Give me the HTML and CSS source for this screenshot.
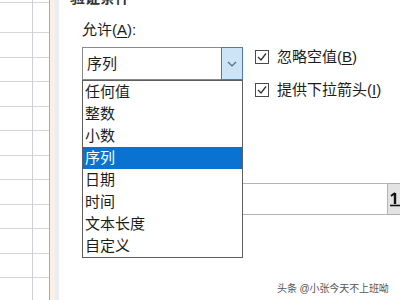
FILE: index.html
```html
<!DOCTYPE html>
<html>

<head>
    <meta charset="UTF-8">
    <title>数据验证</title>
    <link rel="stylesheet" href="styles.css">
</head>

<body>
    <div class="page">
        <div class="sheet"></div>
        <div class="sheet-edge"></div>
        <div class="sheet-shade"></div>

        <div class="dialog">
            <div class="group-title">验证条件</div>
            <div class="field-label">允许(<u>A</u>):</div>

            <div class="allow-row">
                <div class="combo-wrap">
                    <div class="combo">
                        <span class="combo-text">序列</span>
                        <span class="combo-btn">
                            <svg width="10" height="6" viewBox="0 0 10 6">
                                <path d="M1 1 L5 5 L9 1" fill="none" stroke="#5a6a7a" stroke-width="1.2" />
                            </svg>
                        </span>
                    </div>
                    <ul class="drop-list">
                        <li>任何值</li>
                        <li>整数</li>
                        <li>小数</li>
                        <li class="selected">序列</li>
                        <li>日期</li>
                        <li>时间</li>
                        <li>文本长度</li>
                        <li>自定义</li>
                    </ul>
                </div>

                <div class="checks">
                    <label class="check">
                        <span class="box">
                            <svg width="12" height="12" viewBox="0 0 12 12">
                                <path d="M2 6 L5 9 L10 2.5" fill="none" stroke="#333" stroke-width="1.3" />
                            </svg>
                        </span>
                        <span>忽略空值(<u>B</u>)</span>
                    </label>
                    <label class="check">
                        <span class="box">
                            <svg width="12" height="12" viewBox="0 0 12 12">
                                <path d="M2 6 L5 9 L10 2.5" fill="none" stroke="#333" stroke-width="1.3" />
                            </svg>
                        </span>
                        <span>提供下拉箭头(<u>I</u>)</span>
                    </label>
                </div>
            </div>

            <div class="source-row">
                <div class="source-input"></div>
                <div class="source-btn">
                    <svg width="12" height="16" viewBox="0 0 12 16">
                        <path d="M7 2 L7 13" stroke="#111" stroke-width="2.4" />
                        <path d="M3 5 L7 2" stroke="#111" stroke-width="2" />
                        <path d="M2 14.5 L12 14.5" stroke="#111" stroke-width="1.6" />
                    </svg>
                </div>
            </div>
        </div>

        <div class="watermark">头条 @小张今天不上班呦</div>
    </div>
</body>

</html>
```

FILE: styles.css
```css
* {
    margin: 0;
    padding: 0;
    box-sizing: border-box;
}

body,
html {
    width: 400px;
    height: 300px;
    overflow: hidden;
    background: #fff;
}

body {
    font-family: "Liberation Sans", "Noto Sans CJK SC", sans-serif;
    color: #1c1c1c;
    font-size: 15px;
}

u {
    text-decoration: underline;
    text-underline-offset: 2px;
}

.page {
    position: relative;
    display: flex;
    width: 400px;
    height: 300px;
}

/* spreadsheet behind the dialog */
.sheet {
    flex-shrink: 0;
    width: 49px;
    height: 100%;
    background-color: #fff;
    background-image:
        linear-gradient(to right, transparent 32px, #cfcfd8 32px, #cfcfd8 33px, transparent 33px),
        repeating-linear-gradient(to bottom, transparent 0, transparent 23.5px, #d6d6d6 23.5px, #d6d6d6 24.5px);
    background-position: 0 0, 0 9px;
}

.sheet-edge {
    flex-shrink: 0;
    width: 6px;
    height: 100%;
    border-left: 1px solid #c6a676;
    background: #f9f1e3;
}

.sheet-shade {
    flex-shrink: 0;
    width: 4px;
    height: 100%;
    background: #ececf4;
}

.dialog {
    flex: 1;
    min-width: 0;
    display: flex;
    flex-direction: column;
    padding-left: 23px;
    background: #fff;
}

.group-title {
    margin-top: -12px;
    margin-left: -12px;
    line-height: 20px;
    font-weight: bold;
    color: #333;
}

.field-label {
    margin-top: 12px;
    line-height: 20px;
}

.allow-row {
    display: flex;
    margin-top: 7px;
}

.combo-wrap {
    position: relative;
    flex-shrink: 0;
    width: 161px;
}

.combo {
    display: flex;
    height: 33px;
    border: 1px solid #8a8a8a;
    background: #fff;
}

.combo-text {
    flex: 1;
    padding-left: 4px;
    line-height: 31px;
}

.combo-btn {
    width: 22px;
    display: flex;
    align-items: center;
    justify-content: center;
    background: #cde4f7;
    border: 1px solid #4f7ba6;
    margin: -1px -1px -1px 0;
}

.drop-list {
    position: absolute;
    top: 33px;
    left: 0;
    width: 161px;
    height: 178px;
    list-style: none;
    border: 1px solid #5e5e5e;
    background: #fff;
    z-index: 2;
}

.drop-list li {
    height: 22px;
    line-height: 22px;
    padding-left: 2px;
}

.drop-list li.selected {
    background: #0a72d1;
    color: #fff;
}

.checks {
    display: flex;
    flex-direction: column;
    gap: 17px;
    margin-top: 2px;
    margin-left: 12px;
}

.check {
    display: flex;
    align-items: center;
    gap: 8px;
    height: 16px;
    line-height: 16px;
    white-space: nowrap;
}

.box {
    flex-shrink: 0;
    width: 14px;
    height: 14px;
    border: 1px solid #4a4a4a;
    display: flex;
    align-items: center;
    justify-content: center;
    background: #fff;
}

.source-row {
    display: flex;
    margin-top: 85px;
    height: 32px;
}

.source-input {
    flex-shrink: 0;
    width: 306px;
    border: 1px solid #b4b4b4;
    background: #fff;
}

.source-btn {
    flex-shrink: 0;
    width: 24px;
    border: 1px solid #adadad;
    border-left: none;
    background: #e3e3e3;
    padding: 7px 0 0 0;
}

.watermark {
    position: absolute;
    left: 277px;
    top: 280px;
    font-size: 10px;
    letter-spacing: -0.1px;
    color: #555;
    white-space: nowrap;
}
```
